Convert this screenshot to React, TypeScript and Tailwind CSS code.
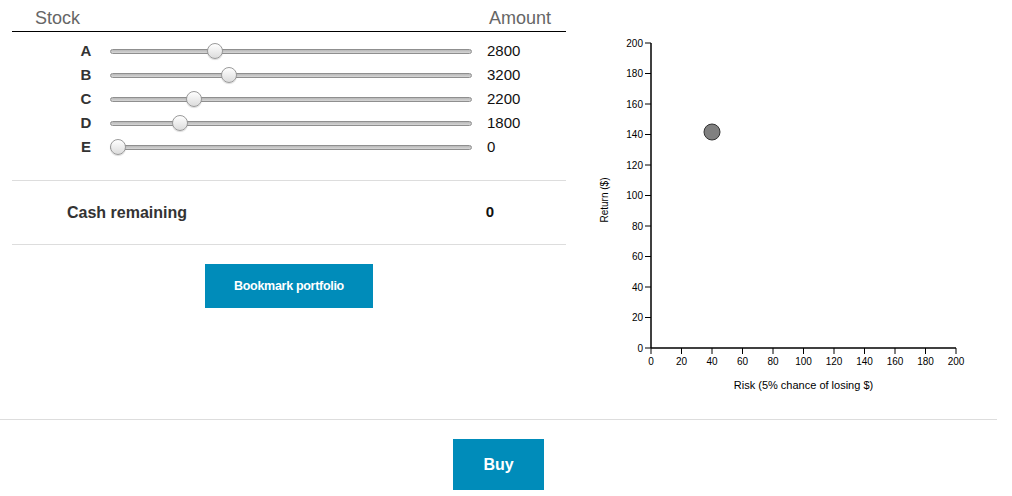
import React from "react";

const stocks = [
  { name: "A", amount: 2800 },
  { name: "B", amount: 3200 },
  { name: "C", amount: 2200 },
  { name: "D", amount: 1800 },
  { name: "E", amount: 0 },
];

const Slider = ({ value }: { value: number }) => {
  // thumb centre runs from 8px to 354px on a 362px track
  const left = 8 + (value / 10000) * 346 - 8;
  return (
    <div className="relative w-[362px] h-[16px] flex items-center">
      <div className="w-full h-[5px] rounded-full border border-[#8f8f8f] bg-gradient-to-b from-[#b9b9b9] to-[#d6d6d6]" />
      <div
        className="absolute top-0 w-[16px] h-[16px] rounded-full border border-[#9a9a9a] bg-gradient-to-b from-white to-[#dcdcdc] shadow-[0_1px_1px_rgba(0,0,0,0.15)]"
        style={{ left }}
      />
    </div>
  );
};

const Chart = () => {
  const x0 = 61;
  const yBottom = 348;
  const k = 1.525;
  const ticks = [0, 20, 40, 60, 80, 100, 120, 140, 160, 180, 200];
  return (
    <svg width={422} height={410} className="block" fontFamily="'Liberation Sans', Arial, sans-serif">
      <line x1={x0} y1={43} x2={x0} y2={yBottom} stroke="#000" strokeWidth={1.5} />
      <line x1={x0} y1={yBottom} x2={x0 + 200 * k} y2={yBottom} stroke="#000" strokeWidth={1.5} />
      {ticks.map((t) => {
        const y = yBottom - t * k;
        return (
          <g key={"y" + t}>
            <line x1={x0 - 6} y1={y} x2={x0} y2={y} stroke="#000" strokeWidth={1} />
            <text x={x0 - 8} y={y + 3.5} fontSize={10} textAnchor="end" fill="#000">
              {t}
            </text>
          </g>
        );
      })}
      {ticks.map((t) => {
        const x = x0 + t * k;
        return (
          <g key={"x" + t}>
            <line x1={x} y1={yBottom} x2={x} y2={yBottom + 6} stroke="#000" strokeWidth={1} />
            <text x={x} y={yBottom + 17} fontSize={10} textAnchor="middle" fill="#000">
              {t}
            </text>
          </g>
        );
      })}
      <text x={x0 + 100 * k} y={389} fontSize={11} textAnchor="middle" fill="#000">
        Risk (5% chance of losing $)
      </text>
      <text
        x={0}
        y={0}
        fontSize={10}
        textAnchor="middle"
        fill="#000"
        transform="translate(18 200) rotate(-90)"
      >
        Return ($)
      </text>
      <circle cx={x0 + 40 * k} cy={132} r={8} fill="#808080" stroke="#333" strokeWidth={1} />
    </svg>
  );
};

export default function App() {
  return (
    <div className="w-[1012px] h-[496px] bg-white overflow-hidden font-['Liberation_Sans',Arial,sans-serif]">
      <div className="flex h-[419px]">
        <div className="ml-[12px] w-[554px] flex flex-col">
          <div className="flex justify-between items-end h-[32px] border-b border-black pl-[23px] pr-[15px] pb-[2px] text-[18px] leading-[22px] text-[#666]">
            <span>Stock</span>
            <span>Amount</span>
          </div>
          <div className="pt-[7px]">
            {stocks.map((s) => (
              <div key={s.name} className="flex items-center h-[24px]">
                <span className="ml-[64px] w-[20px] text-center text-[15px] font-bold text-[#333]">
                  {s.name}
                </span>
                <div className="ml-[14px]">
                  <Slider value={s.amount} />
                </div>
                <span className="ml-[15px] text-[15px] text-[#111]">{s.amount}</span>
              </div>
            ))}
          </div>
          <div className="mt-[21px] border-t border-[#ddd] h-[64px] flex items-center">
            <span className="ml-[55px] text-[16px] font-bold text-[#333]">Cash remaining</span>
            <span className="ml-auto mr-[72px] text-[15px] font-bold text-[#111]">0</span>
          </div>
          <div className="border-t border-[#ddd] pt-[19px] flex justify-center">
            <button className="w-[168px] h-[44px] bg-[#008cba] text-white text-[12.5px] font-bold tracking-[-0.3px]">
              Bookmark portfolio
            </button>
          </div>
        </div>
        <div className="ml-[24px]">
          <Chart />
        </div>
      </div>
      <div className="w-[997px] border-t border-[#ddd] pt-[19px] flex justify-center">
        <button className="w-[91px] h-[51px] bg-[#008cba] text-white text-[16px] font-bold">Buy</button>
      </div>
    </div>
  );
}
